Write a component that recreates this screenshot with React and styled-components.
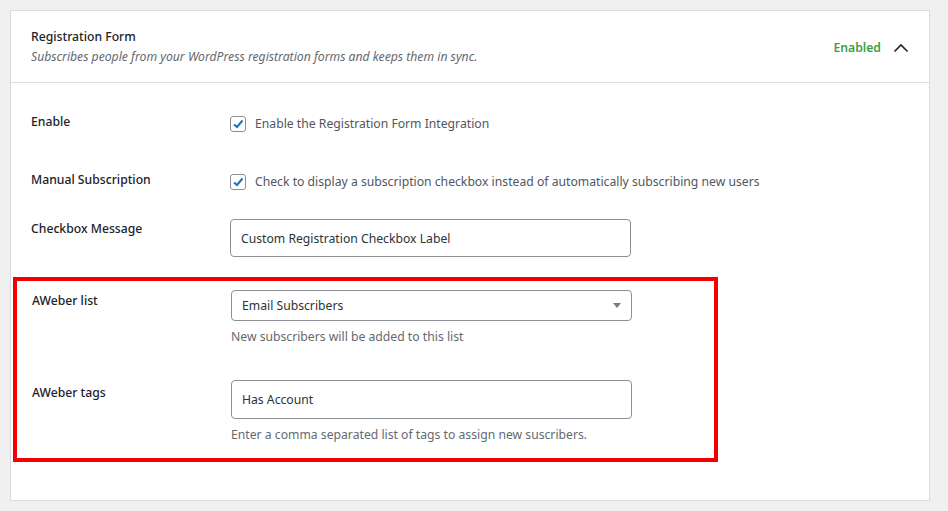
import React from 'react';
import styled, { createGlobalStyle } from 'styled-components';

const Global = createGlobalStyle`
  html, body { margin: 0; background: #f0f0f1; }
  body { font-family: "Noto Sans", "Open Sans", sans-serif; font-size: 12.2px; color: #1d2327; }
`;

const Page = styled.div`
  padding: 10px 18px 10px 10px;
`;

const Card = styled.div`
  background: #fff;
  border: 1px solid #dcdcde;
  height: 491px;
  box-sizing: border-box;
`;

const Header = styled.div`
  display: flex;
  align-items: center;
  justify-content: space-between;
  height: 72px;
  box-sizing: border-box;
  padding: 0 20px;
  border-bottom: 1px solid #dcdcde;
`;

const Title = styled.div`
  font-weight: 500;
  color: #1d2327;
  margin-bottom: 3px;
`;

const Subtitle = styled.div`
  font-style: italic;
  color: #646970;
`;

const Status = styled.div`
  display: flex;
  align-items: center;
  gap: 12px;
  color: #3f9c46;
  font-weight: 600;
  margin-top: 2px;
`;

const Body = styled.div`
  padding: 30px 0 0 2px;
`;

const Row = styled.div`
  display: flex;
  align-items: flex-start;
  padding-left: ${p => p.$pl || 18}px;
  height: ${p => p.$h}px;
`;

const Label = styled.div`
  width: ${p => p.$w || 199}px;
  flex: none;
  font-weight: 500;
  padding-top: ${p => p.$pt || 0}px;
`;

const Field = styled.div`
  display: flex;
  flex-direction: column;
`;

const Check = styled.label`
  display: flex;
  align-items: center;
  gap: 9px;
  color: #50575e;
  margin-top: 2px;
`;

const Box = styled.span`
  width: 14px;
  height: 14px;
  border: 1px solid #8c8f94;
  border-radius: 3px;
  display: flex;
  align-items: center;
  justify-content: center;
`;

const Input = styled.div`
  width: 401px;
  height: ${p => p.$h}px;
  box-sizing: border-box;
  border: 1px solid #8c8f94;
  border-radius: 4px;
  display: flex;
  align-items: center;
  justify-content: space-between;
  padding: 0 10px;
  color: #2c3338;
`;

const Help = styled.div`
  color: #646970;
  margin-top: 7px;
`;

const Highlight = styled.div`
  border: 4px solid #f40000;
  width: 705px;
  box-sizing: border-box;
  padding: 9px 0 0;
`;

const Tick = () => (
  <svg width="12" height="12" viewBox="0 0 12 12">
    <path d="M2 6.5 L5 9 L10.5 2.5" fill="none" stroke="#2271b1" strokeWidth="2" />
  </svg>
);

export default function App() {
  return (
    <>
      <Global />
      <Page>
        <Card>
          <Header>
            <div>
              <Title>Registration Form</Title>
              <Subtitle>Subscribes people from your WordPress registration forms and keeps them in sync.</Subtitle>
            </div>
            <Status>
              Enabled
              <svg width="16" height="10" viewBox="0 0 16 10">
                <path d="M1.5 8.5 L8 2 L14.5 8.5" fill="none" stroke="#1d2327" strokeWidth="1.6" />
              </svg>
            </Status>
          </Header>
          <Body>
            <Row $h={58}>
              <Label>Enable</Label>
              <Check><Box><Tick /></Box>Enable the Registration Form Integration</Check>
            </Row>
            <Row $h={48}>
              <Label>Manual Subscription</Label>
              <Check><Box><Tick /></Box>Check to display a subscription checkbox instead of automatically subscribing new users</Check>
            </Row>
            <Row $h={58}>
              <Label $pt={1}>Checkbox Message</Label>
              <Input $h={38}>Custom Registration Checkbox Label</Input>
            </Row>
            <Highlight>
              <Row $h={90} $pl={15}>
                <Label $pt={2}>AWeber list</Label>
                <Field>
                  <Input $h={31}>
                    Email Subscribers
                    <svg width="8" height="5" viewBox="0 0 8 5"><path d="M0 0 H8 L4 5 Z" fill="#787c82" /></svg>
                  </Input>
                  <Help>New subscribers will be added to this list</Help>
                </Field>
              </Row>
              <Row $h={78} $pl={15}>
                <Label $pt={4}>AWeber tags</Label>
                <Field>
                  <Input $h={39}>Has Account</Input>
                  <Help>Enter a comma separated list of tags to assign new suscribers.</Help>
                </Field>
              </Row>
            </Highlight>
          </Body>
        </Card>
      </Page>
    </>
  );
}
